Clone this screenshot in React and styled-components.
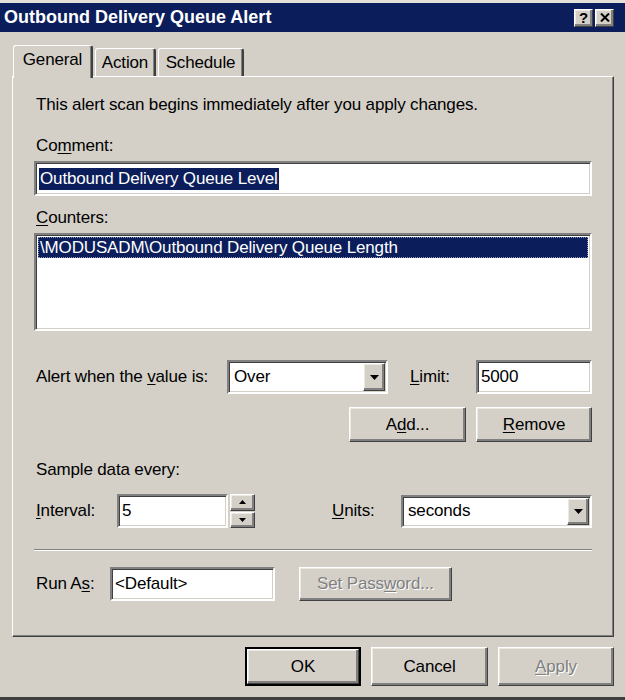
import React from "react";
import styled, { createGlobalStyle, css } from "styled-components";

const Global = createGlobalStyle`
  html, body { margin: 0; padding: 0; background: #d4d0c8; }
  body { font-family: "Liberation Sans", Arial, sans-serif; }
  * { box-sizing: border-box; }
`;

const raised = css`
  border: 1px solid;
  border-color: #ffffff #404040 #404040 #ffffff;
  box-shadow: inset -2px -2px 0 #808080, inset 1px 1px 0 #ece9e2;
  background: #d4d0c8;
`;

const sunken = css`
  border: 2px solid;
  border-color: #808080 #ffffff #ffffff #808080;
  box-shadow: inset 1px 1px 0 #404040, inset -1px -1px 0 #d4d0c8;
  background: #ffffff;
`;

const Window = styled.div`
  width: 625px;
  height: 700px;
  background: #d4d0c8;
  border-top: 3px solid #e4e1da;
  border-bottom: 3px solid #404040;
  display: flex;
  flex-direction: column;
  font-size: 17px;
  letter-spacing: -0.15px;
  color: #000;
`;

const TitleBar = styled.div`
  height: 29px;
  flex: none;
  background: #0b1e5b;
  display: flex;
  align-items: center;
  padding: 0 11px 0 4px;
  gap: 2px;
`;

const Title = styled.div`
  flex: 1;
  color: #fff;
  font-weight: bold;
  font-size: 18px;
  letter-spacing: 0;
`;

const CaptionButton = styled.div`
  ${raised};
  width: 19px;
  height: 18px;
  display: flex;
  align-items: center;
  justify-content: center;
  font-weight: bold;
  font-size: 15px;
  line-height: 1;
  color: #000;
  padding-bottom: 1px;
`;

const Body = styled.div`
  flex: 1;
  display: flex;
  flex-direction: column;
  padding: 13px 11px 0 12px;
`;

const TabStrip = styled.div`
  display: flex;
  align-items: flex-end;
  height: 31px;
  flex: none;
  padding-left: 1px;
  gap: 2px;
`;

const Tab = styled.div`
  height: ${(p) => (p.$active ? 33 : 28)}px;
  width: ${(p) => p.$w}px;
  margin-bottom: ${(p) => (p.$active ? -2 : 0)}px;
  position: relative;
  z-index: ${(p) => (p.$active ? 2 : 0)};
  background: #d4d0c8;
  border-top: 1px solid #ffffff;
  border-left: 1px solid #ffffff;
  border-right: 2px solid #404040;
  border-radius: 3px 3px 0 0;
  box-shadow: inset -1px 0 0 #808080;
  display: flex;
  align-items: center;
  justify-content: center;
  padding-bottom: ${(p) => (p.$active ? 4 : 0)}px;
`;

const Panel = styled.div`
  height: 561px;
  flex: none;
  border: 1px solid;
  border-color: #ffffff #404040 #404040 #ffffff;
  box-shadow: inset -1px -1px 0 #808080;
  padding: 0 21px 0 21px;
  display: flex;
  flex-direction: column;
  position: relative;
  z-index: 1;
`;

const Text = styled.div`
  line-height: 20px;
  height: 20px;
  flex: none;
  padding-left: 2px;
  margin-top: ${(p) => p.$mt || 0}px;
  white-space: nowrap;
`;

const U = styled.span`
  text-decoration: underline;
  text-underline-offset: 2px;
`;

const Field = styled.div`
  ${sunken};
  height: ${(p) => p.$h || 35}px;
  width: ${(p) => (p.$w ? `${p.$w}px` : "auto")};
  flex: ${(p) => (p.$grow ? "1 1 auto" : "none")};
  margin-top: ${(p) => p.$mt || 0}px;
  display: flex;
  align-items: center;
  padding-left: 3px;
  white-space: nowrap;
  overflow: hidden;
`;

const Selected = styled.span`
  background: #0b1e5b;
  color: #fff;
  padding: 1px 1px;
`;

const ListBox = styled.div`
  ${sunken};
  height: 98px;
  flex: none;
  margin-top: 5px;
  padding: 2px;
`;

const ListRow = styled.div`
  height: 21px;
  line-height: 21px;
  padding-left: 2px;
  background: ${(p) => (p.$selected ? "#0b1e5b" : "transparent")};
  color: ${(p) => (p.$selected ? "#fff" : "#000")};
  outline: ${(p) => (p.$selected ? "1px dotted #8a93b8" : "none")};
  outline-offset: -1px;
  white-space: nowrap;
`;

const Row = styled.div`
  display: flex;
  flex: none;
  align-items: center;
  margin-top: ${(p) => p.$mt || 0}px;
  justify-content: ${(p) => p.$justify || "flex-start"};
  gap: ${(p) => p.$gap || 0}px;
`;

const Label = styled.div`
  width: ${(p) => p.$w}px;
  flex: none;
  padding-left: ${(p) => (p.$pl === undefined ? 2 : p.$pl)}px;
  white-space: nowrap;
`;

const Combo = styled.div`
  ${sunken};
  width: ${(p) => p.$w}px;
  height: ${(p) => p.$h || 34}px;
  display: flex;
  align-items: stretch;
  padding: 1px;
  flex: none;
`;

const ComboText = styled.div`
  flex: 1;
  display: flex;
  align-items: center;
  padding-left: 4px;
`;

const DropButton = styled.div`
  ${raised};
  width: 22px;
  display: flex;
  align-items: center;
  justify-content: center;
`;

const Button = styled.div`
  ${raised};
  width: ${(p) => p.$w || 117}px;
  height: ${(p) => p.$h || 35}px;
  display: flex;
  align-items: center;
  justify-content: center;
  flex: none;
  color: ${(p) => (p.$disabled ? "#808080" : "#000")};
  text-shadow: ${(p) => (p.$disabled ? "1px 1px 0 #ffffff" : "none")};
  margin-left: ${(p) => p.$ml || 0}px;
`;

const DefaultButton = styled.div`
  border: 2px solid #000;
  width: 116px;
  height: 39px;
  display: flex;
  flex: none;
  & > div {
    width: 100%;
    height: 100%;
  }
`;

const Spin = styled.div`
  display: flex;
  flex-direction: column;
  gap: 1px;
  margin-left: 2px;
  height: 34px;
  flex: none;
`;

const SpinButton = styled.div`
  ${raised};
  width: 25px;
  flex: 1;
  display: flex;
  align-items: center;
  justify-content: center;
`;

const Separator = styled.div`
  height: 2px;
  flex: none;
  margin-top: 21px;
  border-top: 1px solid #808080;
  border-bottom: 1px solid #ffffff;
`;

const Footer = styled.div`
  display: flex;
  justify-content: flex-end;
  gap: 10px;
  margin-top: 10px;
`;

const Triangle = ({ w = 9, h = 5, up }) => (
  <svg width={w} height={h} viewBox={`0 0 ${w} ${h}`}>
    <polygon
      points={up ? `0,${h} ${w},${h} ${w / 2},0` : `0,0 ${w},0 ${w / 2},${h}`}
      fill="#000"
    />
  </svg>
);

export default function App() {
  return (
    <>
      <Global />
      <Window>
        <TitleBar>
          <Title>Outbound Delivery Queue Alert</Title>
          <CaptionButton>?</CaptionButton>
          <CaptionButton>
            <svg width="10" height="9" viewBox="0 0 10 9">
              <path d="M1 0.5 L9 8.5 M9 0.5 L1 8.5" stroke="#000" strokeWidth="2" />
            </svg>
          </CaptionButton>
        </TitleBar>
        <Body>
          <TabStrip>
            <Tab $active $w={80}>General</Tab>
            <Tab $w={61}>Action</Tab>
            <Tab $w={86}>Schedule</Tab>
          </TabStrip>
          <Panel>
            <Text $mt={18}>This alert scan begins immediately after you apply changes.</Text>
            <Text $mt={21}>
              Co<U>m</U>ment:
            </Text>
            <Field $mt={5}>
              <Selected>Outbound Delivery Queue Level</Selected>
            </Field>
            <Text $mt={12}>
              <U>C</U>ounters:
            </Text>
            <ListBox>
              <ListRow $selected>\MODUSADM\Outbound Delivery Queue Length</ListRow>
            </ListBox>
            <Row $mt={29}>
              <Label $w={193}>
                Alert when the <U>v</U>alue is:
              </Label>
              <Combo $w={161}>
                <ComboText>Over</ComboText>
                <DropButton>
                  <Triangle />
                </DropButton>
              </Combo>
              <Label $w={88} $pl={22}>
                <U>L</U>imit:
              </Label>
              <Field $h={34} $grow>5000</Field>
            </Row>
            <Row $mt={13} $justify="flex-end" $gap={10}>
              <Button>
                A<U>d</U>d...
              </Button>
              <Button $w={116}>
                <U>R</U>emove
              </Button>
            </Row>
            <Text $mt={18}>Sample data every:</Text>
            <Row $mt={14}>
              <Label $w={83}>
                <U>I</U>nterval:
              </Label>
              <Field $w={111} $h={34}>5</Field>
              <Spin>
                <SpinButton>
                  <Triangle w={7} h={4} up />
                </SpinButton>
                <SpinButton>
                  <Triangle w={7} h={4} />
                </SpinButton>
              </Spin>
              <Label $w={146} $pl={77}>
                <U>U</U>nits:
              </Label>
              <Combo $w={191} $h={33}>
                <ComboText>seconds</ComboText>
                <DropButton>
                  <Triangle />
                </DropButton>
              </Combo>
            </Row>
            <Separator />
            <Row $mt={16}>
              <Label $w={76}>
                Run A<U>s</U>:
              </Label>
              <Field $w={165} $h={34}>&lt;Default&gt;</Field>
              <Button $w={153} $h={34} $ml={24} $disabled>
                Set Pass<U>w</U>ord...
              </Button>
            </Row>
          </Panel>
          <Footer>
            <DefaultButton>
              <Button>OK</Button>
            </DefaultButton>
            <Button $h={39}>Cancel</Button>
            <Button $w={116} $h={39} $disabled>
              <U>A</U>pply
            </Button>
          </Footer>
        </Body>
      </Window>
    </>
  );
}
